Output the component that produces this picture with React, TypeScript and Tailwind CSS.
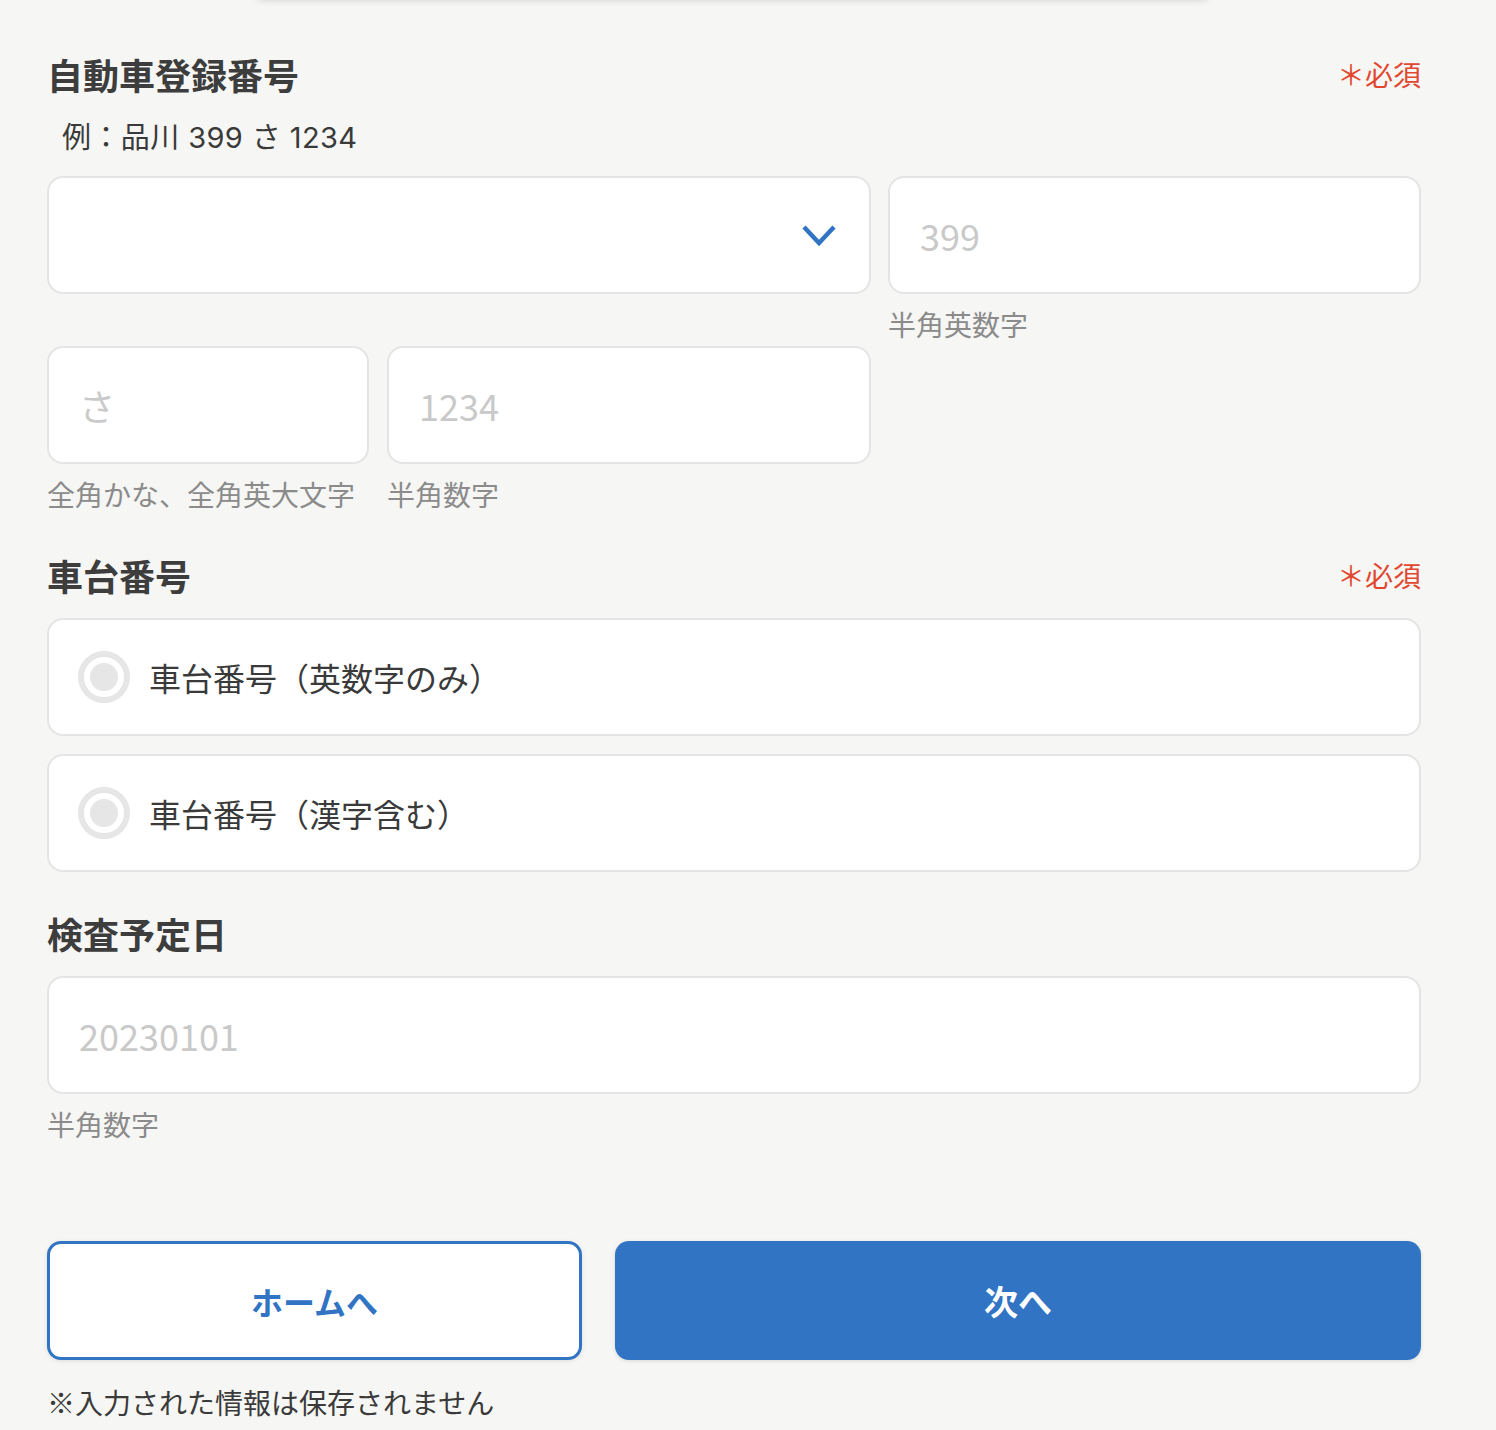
import React from "react";

const font = { fontFamily: '"Noto Sans CJK JP", "Noto Sans", sans-serif' };
const latin = { fontFamily: 'Inter, "Noto Sans CJK JP", sans-serif' };

function Heading({ title, required }: { title: string; required?: boolean }) {
  return (
    <div className="flex items-center justify-between h-[54px]">
      <h2 className="text-[36px] font-bold text-[#3d3d3d] leading-[54px]">{title}</h2>
      {required && <span className="text-[28px] text-[#e1472f] leading-[54px]">＊必須</span>}
    </div>
  );
}

function Field({ placeholder, className }: { placeholder?: string; className?: string }) {
  return (
    <div
      className={`h-[118px] bg-white border-2 border-[#e4e4e4] rounded-[16px] flex items-center px-[30px] ${className ?? ""}`}
    >
      <span className="text-[36px] text-[#c9c9c9] leading-none">{placeholder}</span>
    </div>
  );
}

function Helper({ text }: { text: string }) {
  return <p className="mt-2 text-[28px] leading-[44px] text-[#8b8b8b] whitespace-nowrap">{text}</p>;
}

function Radio({ label }: { label: string }) {
  return (
    <div className="h-[118px] bg-white border-2 border-[#e4e4e4] rounded-[16px] flex items-center pl-[29px] gap-[19px]">
      <div className="w-[52px] h-[52px] rounded-full border-[6px] border-[#e6e6e6] flex items-center justify-center">
        <div className="w-[28px] h-[28px] rounded-full bg-[#e6e6e6]" />
      </div>
      <span className="text-[32px] text-[#3a3a3a]">{label}</span>
    </div>
  );
}

export default function App() {
  return (
    <div className="min-h-[1430px] bg-[#f6f6f4] overflow-hidden" style={font}>
      <div className="ml-[255px] w-[955px] h-[8px] -mt-[8px] rounded-b-[12px] bg-white shadow-[0_1px_6px_rgba(0,0,0,0.12)]" />
      <div className="ml-[47px] w-[1374px] pt-[47px]">
        <Heading title="自動車登録番号" required />
        <p className="mt-4 pl-[15px] text-[29px] leading-[42px] text-[#3a3a3a] tracking-[0.4px]" style={latin}>
          例：品川 399 さ 1234
        </p>

        <div className="mt-[17px] flex gap-[17px]">
          <div className="w-[824px] h-[118px] bg-white border-2 border-[#e4e4e4] rounded-[16px] flex items-center justify-end pr-[32px]">
            <svg width="36" height="24" viewBox="0 0 36 24" fill="none">
              <polyline points="3,4 18,20 33,4" stroke="#3174c4" strokeWidth="4.5" strokeLinejoin="miter" />
            </svg>
          </div>
          <div className="w-[533px]">
            <Field placeholder="399" />
            <Helper text="半角英数字" />
          </div>
        </div>

        <div className="flex gap-[18px]">
          <div className="w-[322px]">
            <Field placeholder="さ" />
            <Helper text="全角かな、全角英大文字" />
          </div>
          <div className="w-[484px]">
            <Field placeholder="1234" />
            <Helper text="半角数字" />
          </div>
        </div>

        <div className="mt-[32px]">
          <Heading title="車台番号" required />
        </div>
        <div className="mt-4 flex flex-col gap-[18px]">
          <Radio label="車台番号（英数字のみ）" />
          <Radio label="車台番号（漢字含む）" />
        </div>

        <div className="mt-[34px]">
          <Heading title="検査予定日" />
        </div>
        <div className="mt-4">
          <Field placeholder="20230101" />
          <Helper text="半角数字" />
        </div>

        <div className="mt-[95px] flex gap-[33px]">
          <button className="w-[535px] h-[119px] bg-white border-[3px] border-[#3174c4] rounded-[14px] text-[32px] font-bold text-[#3174c4] shadow-[0_1px_4px_rgba(0,0,0,0.1)]">
            ホームへ
          </button>
          <button className="flex-1 h-[119px] bg-[#3174c4] rounded-[14px] text-[34px] font-bold text-white shadow-[0_1px_4px_rgba(0,0,0,0.12)]">
            次へ
          </button>
        </div>
        <p className="mt-[20px] text-[28px] leading-[44px] text-[#3a3a3a]">※入力された情報は保存されません</p>
      </div>
    </div>
  );
}
